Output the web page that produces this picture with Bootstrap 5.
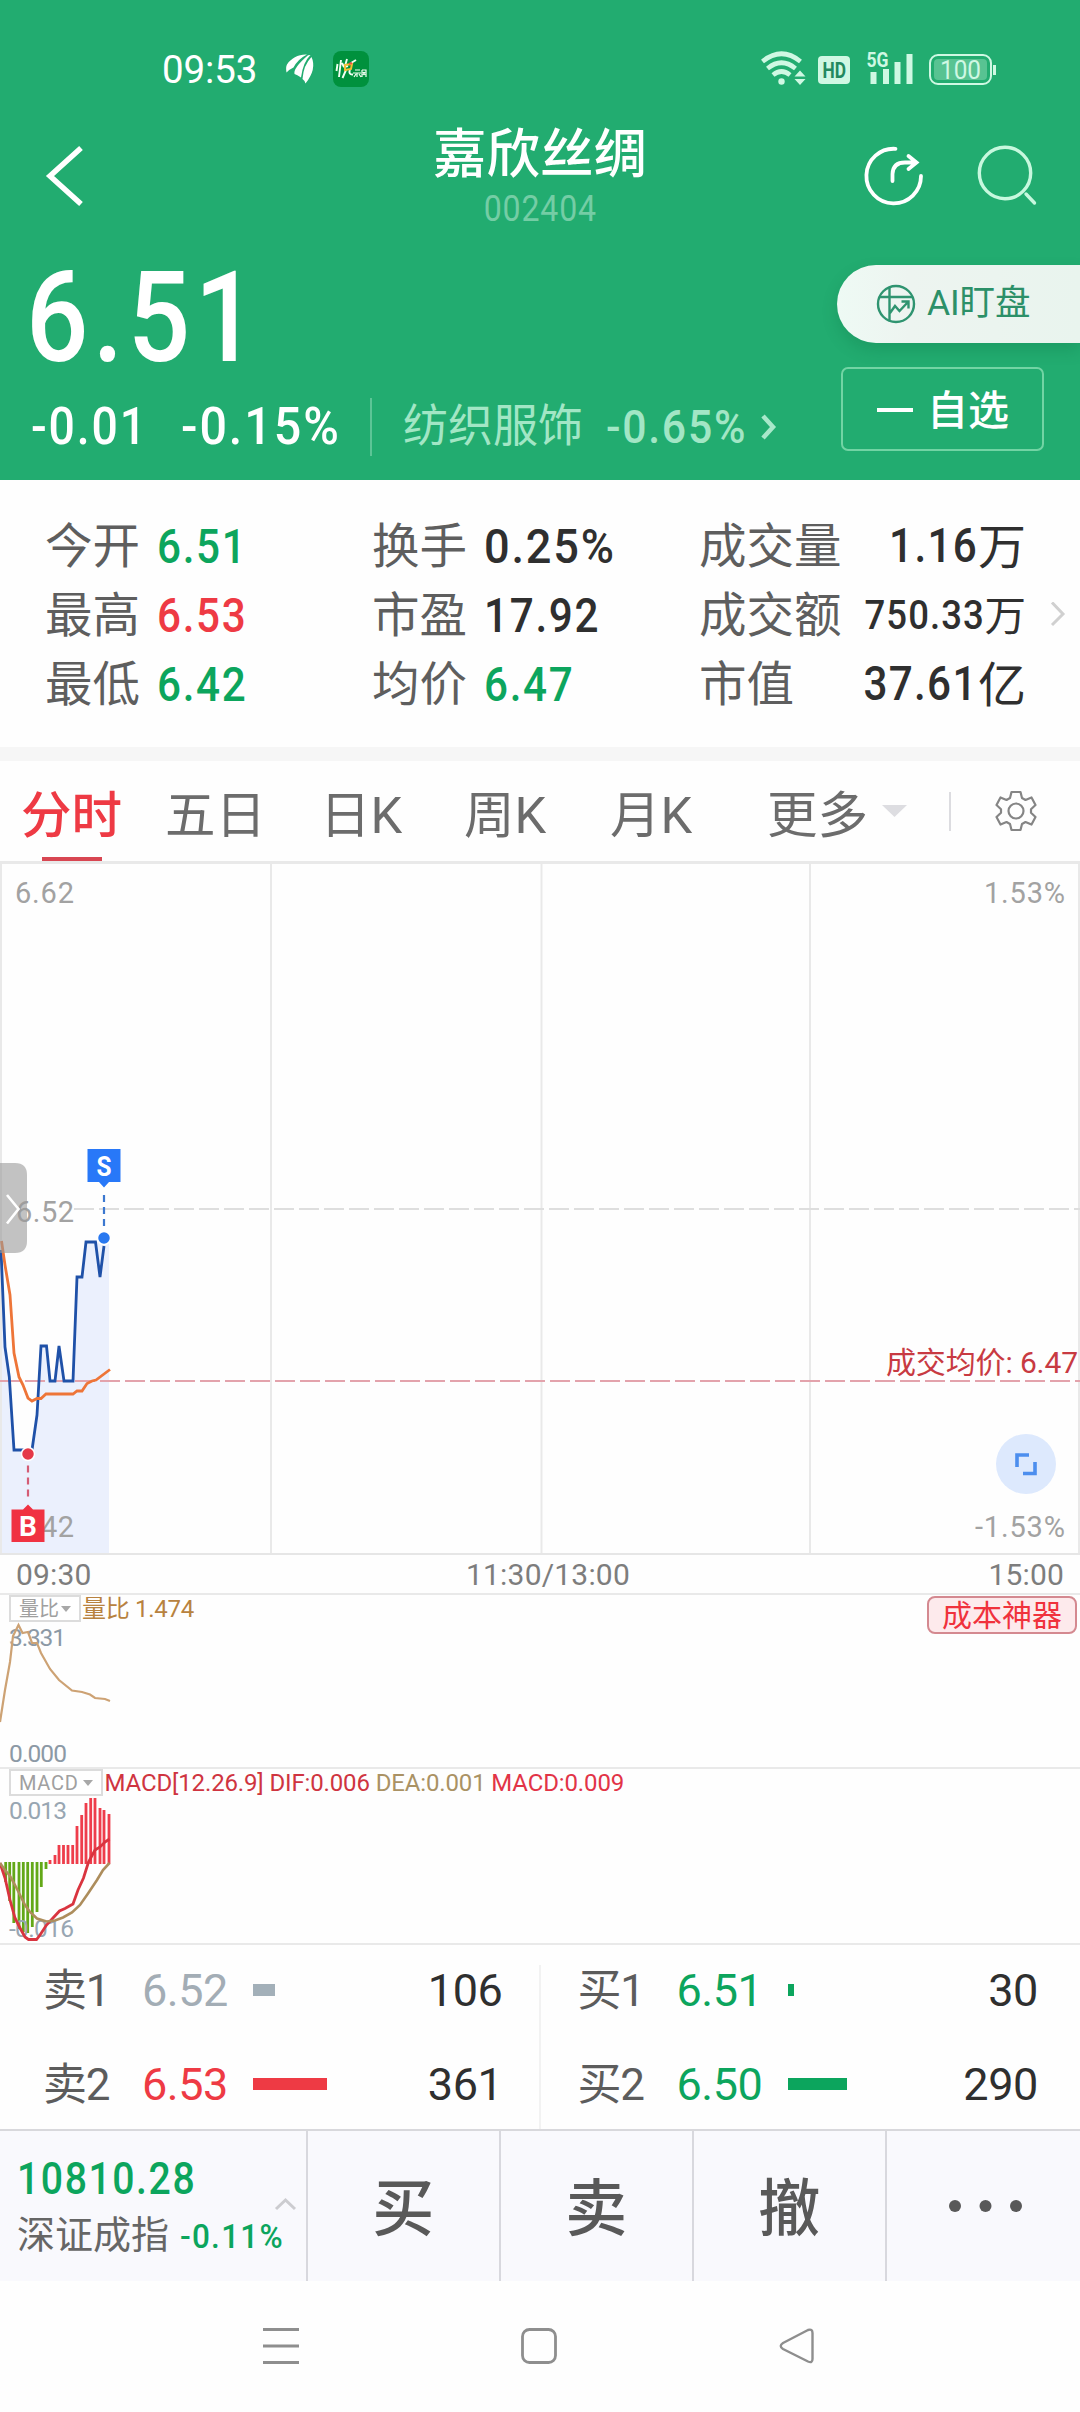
<!DOCTYPE html>
<html lang="zh-CN">
<head>
<meta charset="utf-8">
<meta name="viewport" content="width=device-width, initial-scale=1">
<title>嘉欣丝绸 002404</title>
<link rel="stylesheet" href="https://cdn.jsdelivr.net/npm/bootstrap@5.3.0/dist/css/bootstrap.min.css">
<style>
:root{--up:#ee3a44;--down:#0ca55d}
body{font-family:Roboto,"Noto Sans CJK SC",sans-serif;line-height:1;width:1080px;height:2412px;overflow:hidden;color:#2f2f2f;background:#fefefe}
svg{display:block;flex:none}
svg text{font-family:Roboto,"Noto Sans CJK SC",sans-serif}
.t-up{color:var(--up)}.t-down{color:var(--down)}
/* narrow numerals */
.din{display:inline-block;white-space:nowrap;font-weight:500;letter-spacing:.04em;transform:scaleX(.88);transform-origin:0 50%}
.din.pct{transform:scaleX(.94)}
.din-end{transform-origin:100% 50%;letter-spacing:.03em}
.hero{height:480px;background:#22ac70;color:#fff}
.status-bar{height:100px;padding:40px 70px 0 162px}
.clock{font-size:38.5px;line-height:60px;width:108px;letter-spacing:-.1px}
.title-bar{height:140px;padding:0 42px 0 44px}
.stock-name{font-size:53.5px;font-weight:500;line-height:56px;padding-top:27px}
.stock-code{font-size:36.5px;line-height:40px;color:#74cda5;margin-top:6px}
.stock-code .din{transform-origin:50% 50%;font-weight:400;letter-spacing:.025em}
.quote{height:240px}
.price{font-size:127px;line-height:130px;margin:13px 0 0 26px;height:130px}
.price .din{transform:scaleX(.865)}
.chg{height:60px;margin:14px 0 0 31px}
.chg .n1{font-size:51.5px;line-height:60px;width:150px}
.chg .n1 .din{transform:scaleX(.9)}
.chg .n2{font-size:51.5px;line-height:60px;width:189px}
.chg .bar{width:2px;height:58px;background:#5cc596;margin-right:31px;margin-left:0}
.chg .sector{font-size:45px;line-height:60px;color:#a2e6c5;width:203px}
.chg .n3{font-size:46px;line-height:60px;color:#a2e6c5;width:152px}
.chg .n3 .din{transform:scaleX(.93)}
.ai-pill{width:243px;height:78px;margin-top:25px;border-radius:40px 0 0 40px;background:linear-gradient(90deg,#eefaf4,#edf4f0 30%,#e9f4ee);color:#2c9068;font-size:35.5px;padding-left:39px;box-shadow:0 7px 16px rgba(10,90,50,.2)}
.ai-pill span{margin-left:11px;letter-spacing:-.1px}
.fav-btn{width:203px;height:84px;margin:24px 36px 0 0;border:2px solid #72d4a4;border-radius:7px;background:none;color:#fff;font-size:41px;font-weight:500;padding:4px 0 0 34px;line-height:1}
.fav-btn i{width:36px;height:4px;background:#fff;margin-right:14px;margin-top:-2px}
.facts{height:267px;padding:33px 0 0 45px}
.fact-col{width:327px}
.fact-col.last{width:327px}
.fact{height:69.3px;font-size:48px;width:100%}
.fact .lb{font-size:47.5px;color:#5e5e5e;width:112px;white-space:nowrap}
.fact .din{margin-top:-2px}
.facts .more{margin:89px 0 0 8px}
.band{height:14px;background:#f6f6f6}
.tabs{height:103px;border-bottom:3px solid #e9e9e9;font-size:50.5px;color:#6c6c6c;padding:0 0 0 21px;font-weight:400}
.tabs .tab{height:100px;padding-top:31px;line-height:48px;white-space:nowrap;position:relative}
.tabs .on{color:var(--up);font-weight:500}
.tabs .on::after{content:"";position:absolute;left:21px;bottom:0;width:60px;height:4px;background:#d84652}
.sep{width:2px;height:39px;background:#dcdce0}
.chart{height:691px}
.axis{height:40px;border-bottom:2px solid #e9e9e9;color:#7d7d7d;font-size:30px;padding:2px 16px 0;letter-spacing:.15px}
.panel{height:174px;border-bottom:2px solid #e9e9e9;position:relative}
.panel>svg{position:absolute;left:0;top:0}
.panel-head{font-size:24px;height:27px;padding-left:9px;position:relative;white-space:pre}
.pick{height:27px;border:2px solid #dcdcdc;color:#a0a0a0;padding:0 8px;background:#fff;font-size:20px;margin-right:2px}
.pick i{border:5.5px solid transparent;border-top:6.5px solid #a8a8a8;border-bottom:0;margin-left:2px}
.cost{position:absolute;right:3px;top:1px;width:150px;height:38px;border:2px solid #d48990;border-radius:8px;background:#fdeaec;color:#f0323c;font-size:30px;padding-top:2px;z-index:2}
.book{height:184px}
.side{width:540px;padding-left:43px}
.side.sell{width:541px;padding-left:43px;border-right:2px solid #f2f2f2;margin-top:20px;height:164px}
.side.buy{padding:20px 0 0 37px}
.lvl{height:94px;font-size:45px;margin-top:-22px}
.lvl+.lvl{margin-top:0}
.lvl .k{width:99px;color:#5c5c5c;font-size:44px;letter-spacing:-1.2px;white-space:nowrap;padding-top:2px}
.lvl .p{width:111px;letter-spacing:-.5px}
.lvl .q{height:12px;background:currentColor}
.lvl .v{margin-left:auto;letter-spacing:-.4px}
.dock{height:152px;background:#f9f9fd;border-top:2px solid #d8d8dc;color:#595959}
.dock>div{border-right:2px solid #d8d8de;width:193.3px}
.dock>.idx{width:308px;padding:23px 0 0 17px;position:relative}
.dock>div:last-child{border:0}
.act{font-size:62px;font-weight:500;padding-top:8px}
.sysnav{height:131px}
</style>
<script src="https://cdn.jsdelivr.net/npm/bootstrap@5.3.0/dist/js/bootstrap.bundle.min.js"></script>
</head>
<body>
<header class="hero">
  <div class="status-bar d-flex">
    <span class="clock">09:53</span>
    <svg width="110" height="60" viewBox="0 0 110 60">
      <g fill="#fff"><path d="M16.500 32.500Q15.500 27 17 24.500C21 18 29 14 37 14.500Q28 19 23.500 27.500Q20 29 16.500 32.500Z"/><path d="M24.500 34Q23 28 38 15.200L40.500 15Q33 22 31 37.500Q27 34.500 24.500 34Z"/><path d="M32.500 39Q33.500 25 41.500 17Q47 29 35.500 43.500Q35 40.500 32.500 39Z"/></g>
      <rect x="63" y="11" width="36" height="36" rx="8" fill="#00913d"/>
      <g stroke="#f4fff4" stroke-width="1.900" fill="none"><path d="M67.500 24L66.500 31M71 20L69 37M72 23L74 27M77 19L75 26M74 27L78 26M76 30L72.500 38M80 29Q78 35 83 34.500M81 23L86 20"/><path stroke-width="1.200" d="M85 30H90M83 33H91M87 33V37M84 37L86 34M91 37L89 34M92 30V37M92 30H96V37M93 32L95 35M95 32L93 35"/></g>
      <path d="M75 25L82 24L81 29L75 30Z" fill="none" stroke="#f5bf32" stroke-width="2"/><path d="M79 24L82 23" stroke="#ed514d" stroke-width="2"/>
    </svg>
    <svg class="ms-auto" width="260" height="60" viewBox="0 0 260 60" fill="#cff8e3">
      <g fill="none" stroke="#cff8e3" stroke-width="4.600"><path d="M12.500 21.500Q31.500 6 50.500 21.500"/><path d="M17.500 28.500Q31.500 17 45.500 28.500"/><path d="M23 35Q31.500 28 40 35"/></g>
      <circle cx="31.500" cy="41.500" r="3.200"/><path d="M44.500 36.500L50 30.500L55.500 36.500ZM44.500 39L50 45L55.500 39Z"/>
      <rect x="68" y="16" width="32" height="28" rx="4"/><text x="72.500" y="37.500" font-size="22" font-weight="700" textLength="23.500" lengthAdjust="spacingAndGlyphs" fill="#23895f">HD</text>
      <text x="116.500" y="27" font-size="20" font-weight="700" textLength="22" lengthAdjust="spacingAndGlyphs">5G</text>
      <path d="M120.500 32h6v12h-6zM133 29h6v15h-6zM144.500 22h6v22h-6zM156.500 14h6v30h-6z"/>
      <rect x="180" y="15" width="61" height="29" rx="8" fill="none" stroke="#cff8e3" stroke-width="2"/><rect x="184" y="19" width="53" height="21" rx="4" fill="#58c392"/><rect x="243" y="25" width="3" height="10"/>
      <text x="190" y="38.500" font-size="25.500" textLength="41" lengthAdjust="spacingAndGlyphs">100</text>
    </svg>
  </div>
  <div class="title-bar d-flex justify-content-between">
    <svg width="176" height="140" viewBox="0 0 176 140"><path d="M37 48L6 76L37 104" fill="none" stroke="#fff" stroke-width="5.500"/></svg>
    <div class="text-center">
      <div class="stock-name">嘉欣丝绸</div>
      <div class="stock-code"><span class="din">002404</span></div>
    </div>
    <svg width="178" height="140" viewBox="860 100 178 140" fill="none" stroke-linecap="round">
      <g stroke="#fff" stroke-width="3.800"><path d="M895.500 148.800A27.300 27.300 0 1 0 921 176"/><path d="M892.500 181V174Q893 162.500 905 162.500H915M908.500 156L916.500 162.500L908.500 169"/></g>
      <g stroke="#c7f8de" stroke-width="3.400"><circle cx="1005" cy="173" r="25.700"/><path d="M1026 194L1034.500 203"/></g>
    </svg>
  </div>
  <div class="quote d-flex justify-content-between">
    <div>
      <div class="price"><span class="din">6.51</span></div>
      <div class="chg d-flex align-items-center">
        <div class="n1"><span class="din">-0.01</span></div><div class="n2"><span class="din pct">-0.15%</span></div>
        <div class="bar"></div><div class="sector">纺织服饰</div><div class="n3"><span class="din pct">-0.65%</span></div>
        <svg width="20" height="30" viewBox="0 0 20 30"><path d="M5 4L15 15L5 26" fill="none" stroke="#a8e8ca" stroke-width="4.500"/></svg>
      </div>
    </div>
    <div class="d-flex flex-column align-items-end">
      <div class="ai-pill d-flex align-items-center">
        <svg width="40" height="40" viewBox="0 0 40 40" fill="none" stroke="#2f9470" stroke-width="2.400"><circle cx="20" cy="20" r="18"/><path d="M3 13H37M13.500 3V37M14 29L19 22L23.500 27L32 18M25.500 17.500H32.500V24.500"/></svg>
        <span>AI盯盘</span>
      </div>
      <button class="fav-btn d-flex align-items-center"><i></i>自选</button>
    </div>
  </div>
</header>

<section class="facts d-flex">
  <div class="fact-col">
    <div class="fact d-flex align-items-center"><span class="lb">今开</span><span class="din t-down">6.51</span></div>
    <div class="fact d-flex align-items-center"><span class="lb">最高</span><span class="din t-up">6.53</span></div>
    <div class="fact d-flex align-items-center"><span class="lb">最低</span><span class="din t-down">6.42</span></div>
  </div>
  <div class="fact-col">
    <div class="fact d-flex align-items-center"><span class="lb">换手</span><span class="din pct">0.25%</span></div>
    <div class="fact d-flex align-items-center"><span class="lb">市盈</span><span class="din">17.92</span></div>
    <div class="fact d-flex align-items-center"><span class="lb">均价</span><span class="din t-down">6.47</span></div>
  </div>
  <div class="fact-col last">
    <div class="fact d-flex align-items-center justify-content-between"><span class="lb">成交量</span><span class="d-flex"><span class="din din-end">1.16</span><span class="unit">万</span></span></div>
    <div class="fact d-flex align-items-center justify-content-between"><span class="lb">成交额</span><span class="d-flex" style="font-size:41.5px"><span class="din din-end">750.33</span><span class="unit">万</span></span></div>
    <div class="fact d-flex align-items-center justify-content-between"><span class="lb">市值</span><span class="d-flex"><span class="din din-end">37.61</span><span class="unit">亿</span></span></div>
  </div>
  <svg class="more ms-auto me-2" width="24" height="30" viewBox="0 0 24 30"><path d="M4 0.500L15 12L4 23" fill="none" stroke="#d0d0d0" stroke-width="3"/></svg>
</section>
<div class="band"></div>

<nav class="tabs d-flex">
  <div class="tab on" style="width:144px">分时</div>
  <div class="tab" style="width:155px">五日</div>
  <div class="tab" style="width:144px">日K</div>
  <div class="tab" style="width:146px">周K</div>
  <div class="tab" style="width:157px">月K</div>
  <div class="tab" style="width:115px">更多</div>
  <div class="d-flex align-items-center">
    <svg width="26" height="14" viewBox="0 0 26 14"><path d="M0 1H25L12.500 13Z" fill="#dddde1"/></svg>
    <div class="sep" style="margin-left:41px"></div>
    <svg style="margin-left:43px" width="44" height="44" viewBox="-22 -22 44 44" fill="none" stroke="#858585" stroke-width="2.200" stroke-linejoin="round"><path d="M-4.500 -19H4.500L6 -13L9.500 -11L15.500 -13.500L19.500 -6L15 -1.800V1.800L19.500 6L15.500 13.500L9.500 11L6 13L4.500 19H-4.500L-6 13L-9.500 11L-15.500 13.500L-19.500 6L-15 1.800V-1.800L-19.500 -6L-15.500 -13.500L-9.500 -11L-6 -13Z"/><circle r="7.500"/></svg>
  </div>
</nav>

<section class="chart">
  <svg width="1080" height="691" viewBox="0 864 1080 691">
    <path d="M1 1250L5 1347L9 1377L14 1450H32L37 1415L41 1346H46L50 1381H55L59 1346L64 1381H73L77 1277H82L86 1242H109V1553H1Z" fill="#ebf0fd"/>
    <path d="M1 864V1554M271 864V1554M541.500 864V1554M810 864V1554M1079 864V1554" stroke="#e9e9e9" stroke-width="2"/>
    <path d="M0 1554H1080" stroke="#e6e6e6" stroke-width="2"/>
    <path d="M74 1209H1080" stroke="#dedede" stroke-width="2" stroke-dasharray="20 5"/>
    <path d="M0 1381H1080" stroke="#e3a3ac" stroke-width="2" stroke-dasharray="20 5"/>
    <g font-size="29" fill="#a2a2a2">
      <text x="15" y="903" textLength="59">6.62</text><text x="16" y="1222" textLength="58">6.52</text><text x="16" y="1537" textLength="58">6.42</text>
      <text x="984" y="903" textLength="81">1.53%</text><text x="975" y="1537" textLength="90">-1.53%</text>
    </g>
    <path d="M1 1250L5 1347L9.300 1377L14 1450H32L37 1415L41 1346H46.500L50 1381H55L59 1346L64 1381H73L77 1277H82L86 1242H95.500L100 1277L104 1246" fill="none" stroke="#1f51a8" stroke-width="2.800"/>
    <path d="M1.500 1241L5 1265L10 1295L14 1353L19 1377L23 1385L28 1398L32 1401L37 1398.500H41L46 1394H73L77 1391H82L87 1383.500L92 1381L96 1380L110 1369.500" fill="none" stroke="#ee7538" stroke-width="2.800"/>
    <path d="M104 1195V1227" stroke="#3c78d0" stroke-width="2.200" stroke-dasharray="7 5"/>
    <circle cx="104" cy="1238" r="6.500" fill="#2878f0" stroke="#fff" stroke-width="1.500"/>
    <path d="M87.500 1149H120.500V1182H109L104 1187.500L99 1182H87.500Z" fill="#2878f8"/>
    <text x="104" y="1176" font-size="28" font-weight="700" fill="#fff" text-anchor="middle" textLength="15" lengthAdjust="spacingAndGlyphs">S</text>
    <path d="M28 1465.500V1498" stroke="#d45c75" stroke-width="2.200" stroke-dasharray="7 5"/>
    <circle cx="28" cy="1454" r="6.500" fill="#e53948" stroke="#fff" stroke-width="1.500"/>
    <path d="M11.500 1509.500H23L28 1504.500L33 1509.500H44.500V1542H11.500Z" fill="#f03242"/>
    <text x="28" y="1535.500" font-size="28" font-weight="700" fill="#fff" text-anchor="middle">B</text>
    <path d="M0 1163H15Q27 1163 27 1175V1241Q27 1253 15 1253H0Z" fill="#9a9a9a" fill-opacity=".6"/>
    <path d="M7 1195L18.500 1209L7 1223.500" fill="none" stroke="#fff" stroke-width="2.600"/>
    <text x="886" y="1373" font-size="30" fill="#c83a42" textLength="192">成交均价: 6.47</text>
    <circle cx="1026" cy="1464" r="30" fill="#dde9fd"/>
    <path d="M1029 1455H1017V1467M1035 1462V1473.500H1023" fill="none" stroke="#4c8eee" stroke-width="3.600"/>
  </svg>
</section>
<div class="axis d-flex justify-content-between align-items-center"><span style="width:240px">09:30</span><span class="ms-3" style="letter-spacing:.2px">11:30/13:00</span><span class="text-end" style="width:240px">15:00</span></div>

<section class="panel">
  <svg width="1080" height="172" viewBox="0 1595 1080 172">
    <g font-size="24.500" fill="#8c99a5"><text x="9" y="1646" textLength="57">3.331</text><text x="9" y="1762" textLength="58">0.000</text></g>
    <path d="M0 1722L5 1690L10 1662L13 1636L18.500 1625L22.500 1633L28 1632L32 1643H37L41 1653L50 1669L59 1680L72 1690.500L82 1692L90 1694.500L95 1698L105 1699L110 1701" fill="none" stroke="#cda274" stroke-width="2.200"/>
  </svg>
  <div class="panel-head d-flex align-items-center"><span class="pick d-flex align-items-center" style="margin-right:1px">量比<i></i></span><span style="color:#b8823f;letter-spacing:-.3px">量比 1.474</span></div>
  <div class="cost d-flex align-items-center justify-content-center">成本神器</div>
</section>

<section class="panel" style="height:176px">
  <svg width="1080" height="174" viewBox="0 1769 1080 174">
    <g font-size="24.500" fill="#98a6b2"><text x="9" y="1819" textLength="58">0.013</text></g>
    <path d="M5.700 1862V1882M9.700 1862V1901M13.800 1862V1923M19 1862V1929M23.300 1862V1932M27.700 1862V1933M32.300 1862V1927M37 1862V1912M41.300 1862V1887M46 1862V1869" stroke="#63a818" stroke-width="2.800"/>
    <path d="M50 1864V1860M55 1864V1855M59 1864V1845M63.500 1864V1845M68 1864V1845M72.700 1864V1845M77 1864V1826M81.700 1864V1815M86 1864V1803M90.700 1864V1798M95 1864V1798M100 1864V1808M104 1864V1810M109 1864V1814" stroke="#ee3d4b" stroke-width="2.800"/>
    <text x="9" y="1937" font-size="24.500" fill="#98a6b2" textLength="65">-0.016</text>
    <path d="M0 1863L5 1878L10 1900L15 1918L20 1928L25 1937L28.500 1939.500H36.500L40 1935L46.500 1925L53 1918L59.500 1911L65 1908.500L73 1904L78 1890L83.500 1878L88.500 1862L95 1850L100 1847L105 1842L109.500 1839" fill="none" stroke="#d9343f" stroke-width="2.800"/>
    <path d="M0 1863L5 1870L10 1876L15 1885L20 1895L25 1905L30 1912L37 1918.500L46.500 1921.500L55 1920.500L63 1917.500L72 1912.500L80 1905L88 1893.500L97 1880L103 1870L109.500 1863" fill="none" stroke="#ad8d5c" stroke-width="2.600"/>
  </svg>
  <div class="panel-head d-flex align-items-center" style="color:#cf3440;letter-spacing:-.14px"><span class="pick d-flex align-items-center" style="letter-spacing:.7px">MACD<i style="margin-left:4px"></i></span><span>MACD[12.26.9] </span><span>DIF:0.006 </span><span style="color:#aa9264">DEA:0.001 </span><span style="color:#e23447">MACD:0.009</span></div>
</section>

<section class="book d-flex">
  <div class="side sell">
    <div class="lvl d-flex align-items-center"><span class="k">卖1</span><span class="p" style="color:#a3adb5">6.52</span><span class="q" style="width:22px;color:#a3b0b9"></span><span class="v pe-1" style="margin-right:32px">106</span></div>
    <div class="lvl d-flex align-items-center"><span class="k">卖2</span><span class="p t-up">6.53</span><span class="q t-up" style="width:74px"></span><span class="v pe-1" style="margin-right:32px">361</span></div>
  </div>
  <div class="side buy">
    <div class="lvl d-flex align-items-center"><span class="k">买1</span><span class="p t-down">6.51</span><span class="q t-down" style="width:6px"></span><span class="v" style="margin-right:42px">30</span></div>
    <div class="lvl d-flex align-items-center"><span class="k">买2</span><span class="p t-down">6.50</span><span class="q t-down" style="width:59px"></span><span class="v" style="margin-right:42px">290</span></div>
  </div>
</section>

<footer>
  <div class="dock d-flex">
    <div class="idx">
      <div class="t-down" style="font-size:44.5px;height:50px;line-height:50px"><span class="din">10810.28</span></div>
      <div class="d-flex align-items-center" style="height:62px"><span style="font-size:38px;width:163px;color:#666">深证成指</span><span class="din pct t-down" style="font-size:33.5px;margin-top:3px">-0.11%</span></div>
      <svg class="position-absolute" style="left:274px;top:66px" width="24" height="14" viewBox="0 0 24 14"><path d="M2 12L11.500 3L21 12" fill="none" stroke="#ccccd0" stroke-width="3"/></svg>
    </div>
    <div class="act d-flex align-items-center justify-content-center">买</div>
    <div class="act d-flex align-items-center justify-content-center">卖</div>
    <div class="act d-flex align-items-center justify-content-center">撤</div>
    <div class="d-flex justify-content-center"><svg width="80" height="150" viewBox="-3 0 80 150" fill="#595959"><circle cx="9" cy="75" r="6"/><circle cx="39.500" cy="75" r="6"/><circle cx="70" cy="75" r="6"/></svg></div>
  </div>
  <div class="sysnav">
    <svg width="1080" height="131" viewBox="0 2281 1080 131" fill="none" stroke="#8e8e8e" stroke-width="2.800" stroke-linejoin="round"><path d="M263 2329.500H299M263 2346H299M263 2362.500H299"/><rect x="522.500" y="2329.500" width="33" height="33" rx="7"/><path d="M783 2343L808 2330Q812.500 2328.500 812.500 2333V2359Q812.500 2363.500 808 2361.500L783 2349Q778.500 2346 783 2343Z" stroke-width="2.400"/></svg>
  </div>
</footer>
</body>
</html>
